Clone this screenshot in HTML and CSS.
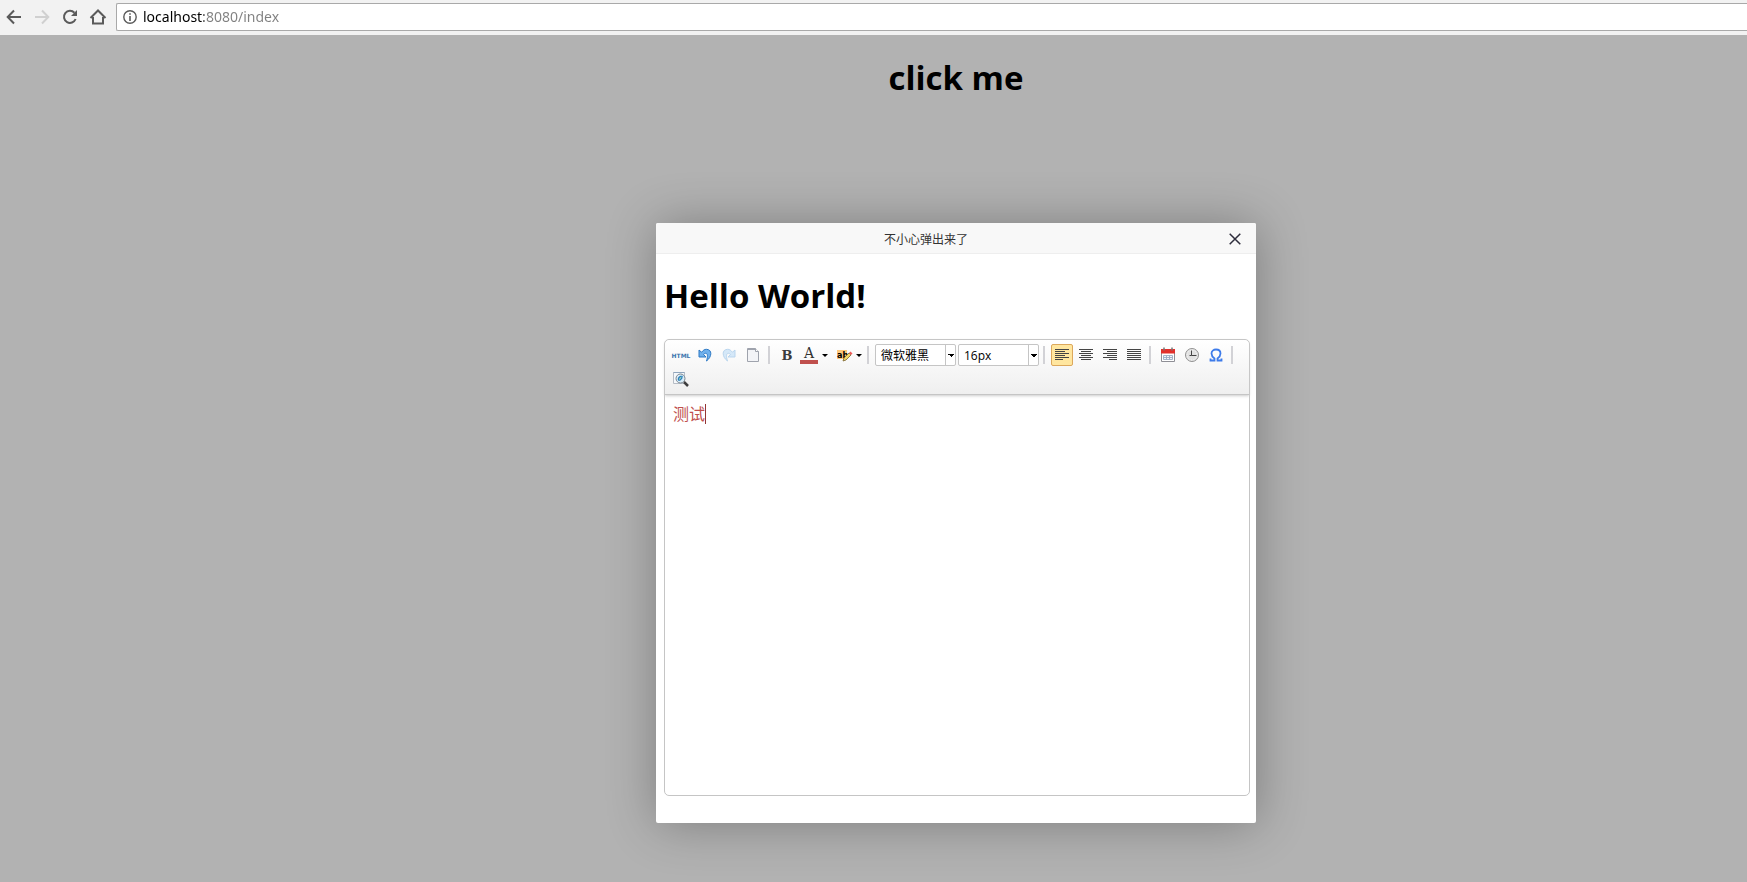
FILE: index.html
```html
<!DOCTYPE html>
<html lang="zh-CN">
<head>
<meta charset="utf-8">
<title>index</title>
<link rel="stylesheet" href="styles.css">
</head>
<body>
<header class="browser">
  <button class="nav" aria-label="Back"><svg width="16" height="16" viewBox="0 0 16 16"><path d="M15 8H2M8 1.5 1.7 8 8 14.5" fill="none" stroke="#5a5a5a" stroke-width="2"/></svg></button>
  <button class="nav" aria-label="Forward" disabled><svg width="16" height="16" viewBox="0 0 16 16"><path d="M1 8h13M8 1.5 14.3 8 8 14.5" fill="none" stroke="#d0d0d0" stroke-width="2"/></svg></button>
  <button class="nav" aria-label="Reload"><svg width="16" height="16" viewBox="0 0 16 16"><path d="M13.6 10A6 6 0 1 1 12.4 3.8" fill="none" stroke="#5a5a5a" stroke-width="2"/><path d="M15 1v6H9z" fill="#5a5a5a"/></svg></button>
  <button class="nav" aria-label="Home"><svg width="18" height="16" viewBox="0 0 18 16"><path d="M1.5 9 9 1.5 16.5 9M4 8v6.5h10V8" fill="none" stroke="#5a5a5a" stroke-width="2"/></svg></button>
  <div class="address">
    <svg width="14" height="14" viewBox="0 0 14 14"><circle cx="7" cy="7" r="6.2" fill="none" stroke="#5a5a5a" stroke-width="1.4"/><path d="M6.2 6h1.6v5H6.2zM6.2 3.2h1.6v1.6H6.2z" fill="#5a5a5a"/></svg>
    <input class="url" type="text" aria-label="Address" value="localhost:8080/index">
  </div>
</header>
<main class="page">
  <h1 class="heading">click me</h1>
  <section class="dialog" role="dialog" aria-label="不小心弹出来了">
    <div class="dialog-bar">
      <span class="dialog-title">不小心弹出来了</span>
      <button class="close" aria-label="Close"><svg width="12" height="12" viewBox="0 0 12 12"><path d="M.7.7l10.6 10.6M11.3.7.7 11.3" stroke="#2e2d3c" stroke-width="1.5"/></svg></button>
    </div>
    <div class="dialog-body">
      <h1 class="heading">Hello World!</h1>
      <div class="editor">
        <div class="toolbar" role="toolbar">
          <button class="tool html-tool">HTML</button>
          <button class="tool" aria-label="Undo"><svg width="16" height="16" viewBox="0 0 16 16"><path d="M2 3v7h7L6.5 7.5C9 5 12 6 9.5 14 15 10 15.5 2.5 9.5 2.3 7.5 2.2 6 3.5 4.5 5.2z" fill="#6fb0ec" stroke="#2c78c4"/></svg></button>
          <button class="tool" aria-label="Redo"><svg width="16" height="16" viewBox="0 0 16 16"><path d="M14 3v7H7l2.5-2.5C7 5 4 6 6.5 14 1 10 .5 2.5 6.5 2.3 8.5 2.2 10 3.5 11.5 5.2z" fill="#d5e8f8" stroke="#b9d5ee"/></svg></button>
          <button class="tool" aria-label="New document"><svg width="16" height="16" viewBox="0 0 16 16"><path d="M2.5 1.5h8l3 3v10h-11z" fill="#f3f4f7" stroke="#9fa3ad"/><path d="M2 2.5h8.5" stroke="#9fa3ad"/><path d="M10.5 1.5v3h3" fill="#fff" stroke="#9fa3ad"/></svg></button>
          <span class="sep"></span>
          <button class="tool bold-tool">B</button>
          <button class="tool color-tool" aria-label="Text color"><span class="letter">A</span><span class="arrow"></span></button>
          <button class="tool mark-tool" aria-label="Highlight color"><svg width="18" height="16" viewBox="0 0 18 16"><path d="M2 3h10v9H2z" fill="#ffc87a"/><text x="2" y="11" class="ab">ab</text><path d="m8 14 1-3 5-5 2 2-5 5z" fill="#f5d866" stroke="#7b6530" stroke-width=".8"/><path d="m14 6 1.5-1.5 2 2L16 8z" fill="#ef5a5a"/></svg><span class="arrow"></span></button>
          <span class="sep"></span>
          <select class="pick" aria-label="Font"><option>微软雅黑</option></select>
          <select class="pick" aria-label="Font size"><option>16px</option></select>
          <span class="sep"></span>
          <button class="tool active" aria-label="Align left"><svg width="14" height="12" viewBox="0 0 14 12"><path d="M0 .5h14M0 2.5h10M0 4.5h14M0 6.5h10M0 8.5h14M0 10.5h8" stroke="#444"/></svg></button>
          <button class="tool" aria-label="Align center"><svg width="14" height="12" viewBox="0 0 14 12"><path d="M0 .5h14M2 2.5h10M0 4.5h14M2 6.5h10M0 8.5h14M2 10.5h10" stroke="#444"/></svg></button>
          <button class="tool" aria-label="Align right"><svg width="14" height="12" viewBox="0 0 14 12"><path d="M0 .5h14M4 2.5h10M0 4.5h14M4 6.5h10M0 8.5h14M6 10.5h8" stroke="#444"/></svg></button>
          <button class="tool" aria-label="Justify"><svg width="14" height="12" viewBox="0 0 14 12"><path d="M0 .5h14M0 2.5h14M0 4.5h14M0 6.5h14M0 8.5h14M0 10.5h14" stroke="#444"/></svg></button>
          <span class="sep"></span>
          <button class="tool" aria-label="Date"><svg width="16" height="16" viewBox="0 0 16 16"><path d="M1.5 5h13v9.5h-13z" fill="#fff" stroke="#8f8f96"/><path d="M1 2h14v4.5H1z" fill="#e2302c"/><path d="M4 .5v3M12 .5v3" stroke="#777" stroke-width="1.5"/><path d="M3.5 8.5h9v4h-9zM3.5 10.5h9M6.5 8.5v4M9.5 8.5v4" fill="#f1f5fa" stroke="#9aabc4" stroke-width=".9"/></svg></button>
          <button class="tool" aria-label="Time"><svg width="16" height="16" viewBox="0 0 16 16"><circle cx="8" cy="8" r="6.5" fill="#e2e2e2" stroke="#929292"/><circle cx="8" cy="8" r="5" fill="none" stroke="#fff" stroke-dasharray="1 1.6"/><path d="M7.5 3.5v5h5M5.5 8.5h2" fill="none" stroke="#444"/></svg></button>
          <button class="tool" aria-label="Special character"><svg width="16" height="16" viewBox="0 0 16 16"><path d="M2.5 11.5v2h4v-2C4.500 10 3.500 8.500 3.500 6.500c0-2.500 2-4 4.500-4s4.500 1.500 4.500 4c0 2-1 3.500-3 5v2h4v-2" fill="none" stroke="#3d7bea" stroke-width="1.8"/></svg></button>
          <span class="sep"></span>
          <button class="tool" aria-label="Preview"><svg width="18" height="18" viewBox="0 0 18 18"><path d="M1.5 2.5h11v11h-11z" fill="#f5f8fb" stroke="#b5bcc5"/><path d="M1.5 2.5h11" stroke="#8fa5bd"/><circle cx="8.5" cy="8.5" r="4.5" fill="#d9edf8" stroke="#7d8790"/><path d="M6 10.5C5 7 8 5 11 6c-1 1 0 2-1 3s-2 2.500-4 1.500z" fill="#2b7fbe"/><path d="M7 10c0-2 1-3 3-3.500-1 1-1 2.500-3 3.500z" fill="#a8dcb4"/><path d="m12 12 4 4" stroke="#3d3d3d" stroke-width="2.5"/></svg></button>
        </div>
        <div class="content" role="textbox" aria-label="Editor" aria-multiline="true" contenteditable="true"><span class="typed">测试</span></div>
      </div>
    </div>
  </section>
</main>
</body>
</html>
```
FILE: styles.css
```css
* { box-sizing: border-box; }
body {
  margin: 0;
  min-height: 100vh;
  display: flex;
  flex-direction: column;
  background: #b2b2b2;
  color: #000;
  font-family: "Open Sans", "Noto Sans CJK SC", sans-serif;
  overflow-x: hidden;
}
button { padding: 0; border: 0; background: none; font: inherit; }
svg { display: block; flex: none; }

.browser {
  display: flex;
  align-items: center;
  height: 35px;
  padding: 0 0 1px 4px;
  background: #f2f2f2;
}
.nav { display: flex; justify-content: center; width: 20px; margin-right: 8px; }
.address {
  flex: 1;
  display: flex;
  align-items: center;
  gap: 6px;
  height: 28px;
  padding-left: 6px;
  border: 1px solid #a9a9a9;
  border-right: 0;
  border-radius: 2px 0 0 2px;
  background: #fff;
}
.url {
  flex: 1;
  padding: 0;
  border: 0;
  outline: 0;
  font: 14px/20px "Noto Sans", sans-serif;
  color: transparent;
  background: linear-gradient(90deg, #000 61px, #808080 61px);
  background-clip: text;
  -webkit-background-clip: text;
}

.page {
  flex: 1;
  display: flex;
  flex-direction: column;
  align-items: center;
  padding: 19px 0 0 165px;
}
.heading { margin: 0; font-size: 33px; line-height: 48px; font-weight: 700; }

.dialog {
  width: 600px;
  height: 600px;
  margin-top: 121px;
  display: flex;
  flex-direction: column;
  background: #fff;
  border-radius: 2px;
  box-shadow: 1px 1px 50px rgba(0, 0, 0, .3);
}
.dialog-bar {
  display: flex;
  align-items: center;
  height: 31px;
  padding: 1px 15px 0 20px;
  border-bottom: 1px solid #eee;
  border-radius: 2px 2px 0 0;
  background: #f8f8f8;
}
.dialog-title { flex: 1; padding-right: 53px; text-align: center; font-size: 12px; color: #333; }
.close svg { width: 12px; }
.dialog-body { flex: 1; display: flex; flex-direction: column; gap: 19px; padding: 18px 6px 27px 8px; }

.editor {
  flex: 1;
  display: flex;
  flex-direction: column;
  border: 1px solid #c5c5c5;
  border-radius: 5px;
}
.toolbar {
  display: flex;
  flex-wrap: wrap;
  gap: 2px;
  padding: 4px 5px;
  border-bottom: 1px solid #c5c5c5;
  border-radius: 5px 5px 0 0;
  background: linear-gradient(#fff, #efefef);
  box-shadow: 0 1px 3px #ccc;
}
.tool {
  display: flex;
  align-items: center;
  justify-content: center;
  width: 22px;
  height: 22px;
  border-radius: 2px;
}
.active { border: 1px solid #dca85c; background: #ffe69f; }
.html-tool { font: bold 6px "DejaVu Sans", sans-serif; color: #3d75ae; }
.bold-tool { font: bold 13px "DejaVu Serif", serif; color: #3c3c3c; }
.color-tool { width: 31px; gap: 4px; justify-content: flex-start; }
.letter {
  width: 18px;
  border-bottom: 4px solid #c0504d;
  font: 14px/14px "DejaVu Serif", serif;
  color: #333;
}
.mark-tool { width: 30px; gap: 3px; }
.ab { font: bold 8px "DejaVu Sans", sans-serif; }
.arrow { border: 3px solid transparent; border-top-color: #000; border-bottom: 0; }
.sep { width: 2px; height: 18px; margin: 2px 4px 0 2px; background: #d2d2d6; }
.pick {
  appearance: none;
  width: 81px;
  height: 22px;
  padding: 0 0 0 5px;
  border: 1px solid #c5c5c5;
  border-radius: 2px;
  font: 12px "Open Sans", "Noto Sans CJK SC", sans-serif;
  color: #000;
  background:
    conic-gradient(from -45deg at 50% 100%, #000 90deg, transparent 0) right 1px top 9px / 6px 3px no-repeat,
    linear-gradient(#c5c5c5, #c5c5c5) right 9px top 0 / 1px 100% no-repeat,
    #fff;
}
.content { flex: 1; padding: 9px 8px; font-size: 16px; line-height: 20px; color: #c0504d; outline: 0; }
.typed { display: inline-block; border-right: 1px solid #943634; }
```
